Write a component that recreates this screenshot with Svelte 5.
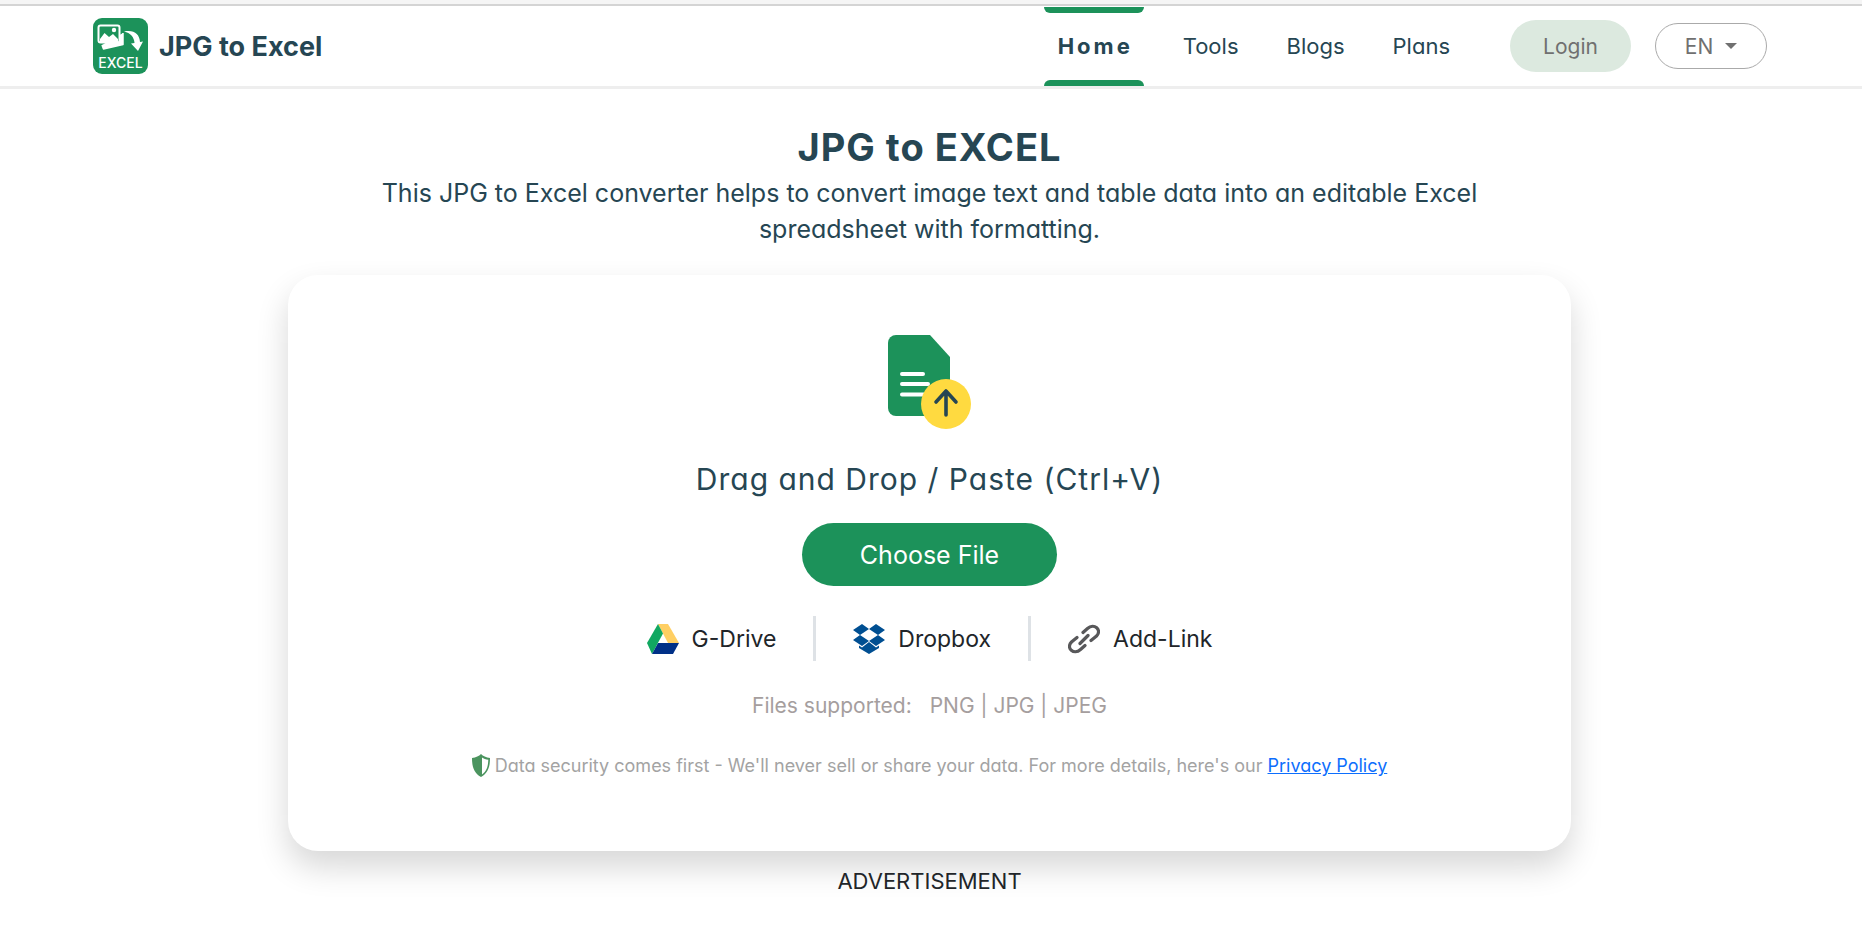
<script>
  const links = ['Tools', 'Blogs', 'Plans'];
  let fileInput;
</script>

<div class="page">
  <div class="strip"></div>
  <header>
    <a class="brand" href="#home">
      <svg width="55" height="56" viewBox="0 0 55 56" aria-hidden="true">
        <rect width="55" height="56" rx="9" fill="#1c925a" />
        <path d="M9 27l1.500 4 19.500-4.500V15" fill="#fff" stroke="#fff" stroke-width="1.500" stroke-linejoin="round" />
        <rect x="5.500" y="7.500" width="21" height="17" rx="2" fill="#1c925a" stroke="#fff" stroke-width="2" />
        <path d="M7 21l4.500-6 4.500 4 4-3 5 5v3H7z" fill="#fff" />
        <circle cx="21" cy="12" r="2.200" fill="#fff" />
        <path d="M31 13.500c10-2 15.500 2.500 16 10.500l3-.5L45 33l-7-7.500 3.500-.5c-.5-6-4-10-10.500-11.500z" fill="#fff" />
        <text x="27.500" y="50" text-anchor="middle" class="logo-text">EXCEL</text>
      </svg>
      <span>JPG to Excel</span>
    </a>
    <nav>
      <a class="active" href="#home">Home</a>
      {#each links as link}
        <a href="#{link.toLowerCase()}">{link}</a>
      {/each}
    </nav>
    <button class="login">Login</button>
    <button class="language">EN
      <svg width="12" height="6" viewBox="0 0 12 6" aria-hidden="true"><path d="M0 0h12L6 6z" fill="#707070" /></svg>
    </button>
  </header>

  <main>
    <h1>JPG to EXCEL</h1>
    <p class="intro">This JPG to Excel converter helps to convert image text and table data into an editable Excel spreadsheet with formatting.</p>

    <section class="card">
      <svg width="84" height="94" viewBox="0 0 84 94" aria-hidden="true">
        <path d="M8 0h34l20 22v51a8 8 0 0 1-8 8H8a8 8 0 0 1-8-8V8a8 8 0 0 1 8-8z" fill="#1c925a" />
        <path d="M14 39h21M14 49h26M14 59.500h26" stroke="#fff" stroke-width="4" stroke-linecap="round" />
        <circle cx="58" cy="69" r="25" fill="#ffda40" />
        <path d="M58 80V56M48 67l10-11 10 11" fill="none" stroke="#264653" stroke-width="3.600" stroke-linecap="round" stroke-linejoin="round" />
      </svg>
      <h2>Drag and Drop / Paste (Ctrl+V)</h2>
      <button class="choose" onclick={() => fileInput.click()}>Choose File</button>
      <input bind:this={fileInput} type="file" aria-label="Choose File" accept=".png,.jpg,.jpeg" hidden />

      <div class="sources">
        <button>
          <svg width="32" height="30" viewBox="0 0 32 30" aria-hidden="true">
            <path d="M11 0h10l11 19H21z" fill="#ffcf63" />
            <path d="M11 0l5 9.500L5 30 0 19z" fill="#11a861" />
            <path d="M11 19h21l-6 11H5z" fill="#003087" />
          </svg>
          G-Drive
        </button>
        <button>
          <svg width="32" height="30" viewBox="0 0 32 30" aria-hidden="true" fill="#004f92">
            <path d="M9 0l7 5-9 6-7-5zM23 0l9 6-7 5-9-6zM7 11l9 6-7 5-9-6zM25 11l7 5-9 6-7-5z" />
            <path d="M16 18l7 5.500 3-2V24l-10 6-10-6v-2.500l3 2z" />
          </svg>
          Dropbox
        </button>
        <button>
          <svg width="32" height="30" viewBox="0 0 32 30" aria-hidden="true" fill="none" stroke="#58585a" stroke-width="3.200" stroke-linecap="round">
            <path d="M15 8.500l4.500-4C26-1.500 34.500 6 28.500 12L23 16.500M17 21.500l-4.500 4C6 31.500-2.500 24 3.500 18L9 13.500M12 19.500l8-8" />
          </svg>
          Add-Link
        </button>
      </div>

      <p class="formats"><span>Files supported:</span><span>PNG | JPG | JPEG</span></p>
      <p class="security">
        <svg width="18" height="23" viewBox="0 0 18 23" aria-hidden="true">
          <path d="M9 0c2 2 5 3.500 9 4 0 9-2 15-9 19C2 19 0 13 0 4c4-.5 7-2 9-4z" fill="#4b945f" />
          <path d="M10 3.500c1.500 1 4 2 6.300 2.300C16 12 15 17 10 20.500z" fill="#fff" />
        </svg>
        <span>Data security comes first - We'll never sell or share your data. For more details, here's our <a href="#privacy">Privacy Policy</a></span>
      </p>
    </section>
    <p class="ad">ADVERTISEMENT</p>
  </main>
</div>

<style>
  :global(body) { margin: 0; background: #fff; }
  .page {
    font-family: Inter, "Open Sans", sans-serif;
    font-feature-settings: "cv11";
    color: #264653;
  }
  * { box-sizing: border-box; }
  button { font: inherit; font-feature-settings: inherit; cursor: pointer; border: 0; background: none; padding: 0; }
  h1, h2, p { margin: 0; }
  .strip { height: 6px; background: #f5f5f5; border-bottom: 2px solid #d4d4d4; }
  header {
    display: flex;
    align-items: center;
    height: 83px;
    padding: 0 95px 0 93px;
    border-bottom: 3px solid #eee;
    font-size: 22px;
  }
  .brand {
    display: flex;
    align-items: center;
    gap: 11px;
    margin-right: auto;
    color: #264653;
    font-size: 27px;
    font-weight: 700;
    text-decoration: none;
  }
  .logo-text { font-size: 14px; font-weight: 500; fill: #fff; }
  nav { display: flex; align-self: stretch; align-items: center; }
  nav a {
    display: flex;
    align-items: center;
    height: 79px;
    padding: 0 24px;
    color: #264653;
    text-decoration: none;
  }
  nav .active {
    position: relative;
    justify-content: center;
    width: 100px;
    margin-right: 15px;
    padding: 0 0 0 3px;
    font-weight: 700;
    letter-spacing: 3px;
  }
  .active::before, .active::after {
    content: "";
    position: absolute;
    left: 0;
    right: 0;
    height: 6px;
    background: #1c925a;
  }
  .active::before { top: 0; border-radius: 0 0 6px 6px; }
  .active::after { bottom: 0; border-radius: 6px 6px 0 0; }
  .login { width: 121px; height: 52px; margin: 0 24px 0 36px; border-radius: 26px; background: #dce9df; color: #707070; font-size: 21px; }
  .language {
    display: flex;
    align-items: center;
    justify-content: center;
    gap: 12px;
    width: 112px;
    height: 46px;
    border: 1px solid #aaa;
    border-radius: 23px;
    color: #707070;
    font-size: 21px;
  }
  main { padding: 34px 3px 0 0; text-align: center; }
  h1 { font-size: 38px; line-height: 48px; font-weight: 700; letter-spacing: 1px; }
  .intro { max-width: 1160px; margin: 4px auto 0; font-size: 25px; line-height: 36px; }
  .card {
    display: flex;
    flex-direction: column;
    align-items: center;
    max-width: 1283px;
    margin: 28px auto 0;
    padding: 60px 24px 72px;
    border-radius: 30px;
    background: #fff;
    box-shadow: 0 16px 32px rgba(0, 0, 0, 0.16);
  }
  h2 { margin-top: 28px; font-size: 30px; line-height: 44px; font-weight: 400; letter-spacing: 1px; }
  .choose { width: 255px; height: 63px; margin-top: 22px; border-radius: 32px; background: #1c925a; color: #fff; font-size: 25px; }
  .sources { display: flex; margin-top: 30px; }
  .sources button {
    display: flex;
    align-items: center;
    gap: 13px;
    height: 45px;
    padding: 0 37px;
    color: #212529;
    font-size: 23px;
  }
  .sources button + button { border-left: 3px solid #dee2e6; }
  .formats { display: flex; gap: 18px; margin-top: 27px; color: #a59e9e; font-size: 22px; line-height: 36px; }
  .formats { font-size: 21px; }
  .security { display: flex; align-items: center; gap: 5px; margin-top: 28px; color: #a3a3a3; font-size: 18px; line-height: 27px; }
  .security a { color: #0d6efd; }
  .ad { margin-top: 12px; color: #212529; font-size: 22px; line-height: 36px; }
</style>
